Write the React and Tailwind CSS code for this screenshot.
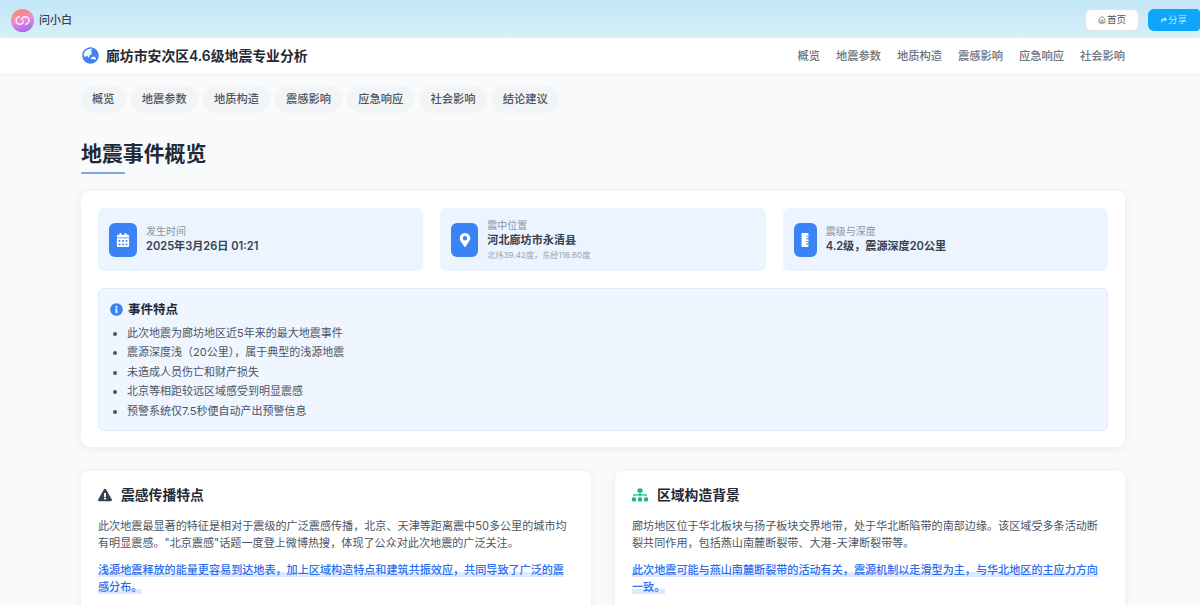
import React from "react";
import { FaCalendarAlt, FaMapMarkerAlt, FaRulerVertical, FaInfoCircle, FaExclamationTriangle, FaSitemap, FaGlobeAsia, FaShare } from "react-icons/fa";
import { Home } from "lucide-react";

const nav = ["概览", "地震参数", "地质构造", "震感影响", "应急响应", "社会影响"];
const pills = [...nav, "结论建议"];
const points = [
  "此次地震为廊坊地区近5年来的最大地震事件",
  "震源深度浅（20公里），属于典型的浅源地震",
  "未造成人员伤亡和财产损失",
  "北京等相距较远区域感受到明显震感",
  "预警系统仅7.5秒便自动产出预警信息",
];

function Logo() {
  return (
    <svg width="23" height="23" viewBox="0 0 24 24" className="shrink-0">
      <defs>
        <linearGradient id="lg" x1="0.3" y1="0" x2="0.6" y2="1">
          <stop offset="0" stopColor="#fb8a66" />
          <stop offset="0.5" stopColor="#ea8cd6" />
          <stop offset="1" stopColor="#a566f0" />
        </linearGradient>
      </defs>
      <circle cx="12" cy="12" r="12" fill="url(#lg)" />
      <circle cx="9.2" cy="12" r="3.9" fill="none" stroke="#fff" strokeWidth="1.5" strokeDasharray="18 6.5" opacity="0.85" />
      <circle cx="14.8" cy="12" r="3.9" fill="none" stroke="#fff" strokeWidth="1.5" strokeDasharray="18 6.5" strokeDashoffset="12" opacity="0.85" />
    </svg>
  );
}

function Tile({ icon, label, value, sub, iconW }) {
  return (
    <div className="flex h-[63px] items-center gap-[9px] rounded-md bg-[#ebf4ff] px-[11px]">
      <div className={`flex h-[34px] ${iconW} shrink-0 items-center justify-center rounded-md bg-[#3b82f6] text-[14px] text-white`}>
        {icon}
      </div>
      <div className="flex min-w-0 flex-col">
        <span className="text-[10px] leading-[14px] text-[#8a94a3]">{label}</span>
        <span className="text-[11.1px] font-semibold leading-[17px] text-[#374151]">{value}</span>
        {sub && <span className="text-[8.15px] leading-[12px] text-[#9ca3af]">{sub}</span>}
      </div>
    </div>
  );
}

function Card({ icon, title, body, hl }) {
  return (
    <section className="rounded-lg bg-white px-[17px] pb-6 pt-[15px] shadow-[0_1px_8px_rgba(15,23,42,0.07)]">
      <h3 className="flex h-[18px] items-center gap-[9px] text-[13.8px] font-semibold text-[#1f2937]">
        {icon}
        {title}
      </h3>
      <p className="mt-[14px] text-[11.1px] leading-[17px] text-[#4b5563]">{body}</p>
      <p className="mt-[10px] text-[11.1px] font-medium leading-[17px] text-[#2b6cf0]">
        <span className="bg-[linear-gradient(transparent_65%,#dbeafe_65%)]">{hl}</span>
      </p>
    </section>
  );
}

export default function App() {
  return (
    <div className="h-[605px] overflow-hidden bg-[#f9fafc] font-['Inter','Noto_Sans_CJK_SC',sans-serif]">
      <header className="flex h-[38px] items-center justify-between bg-[linear-gradient(180deg,#c2e6f8_0%,#d8f0fa_100%)] pl-[11px] pt-[2px]">
        <div className="flex items-center gap-[5px]">
          <Logo />
          <span className="text-[11px] font-medium text-[#374151]">问小白</span>
        </div>
        <div className="flex items-center gap-[9px]">
          <button className="flex h-[22px] w-[54px] items-center justify-center gap-px rounded-md border border-[#dfe3e8] bg-white text-[9.5px] text-[#4b5563]">
            <Home size={8} />
            首页
          </button>
          <button className="flex h-[22px] w-[52px] items-center justify-center gap-px rounded-l-md rounded-r-sm bg-[#0ea5fb] text-[9.5px] text-[#bfe8ff]">
            <FaShare size={6} />
            分享
          </button>
        </div>
      </header>

      <nav className="relative flex h-[36px] items-center justify-between bg-white pl-[82px] pr-[75px] shadow-[0_1px_3px_rgba(15,23,42,0.05)]">
        <div className="flex items-center gap-[7px]">
          <FaGlobeAsia className="text-[17px] text-[#3b82f6]" />
          <span className="text-[13.85px] font-semibold text-[#1f2937]">廊坊市安次区4.6级地震专业分析</span>
        </div>
        <div className="flex items-center gap-[16px] pt-px">
          {nav.map((n) => (
            <span key={n} className="text-[11.25px] font-medium text-[#6b7280]">{n}</span>
          ))}
        </div>
      </nav>

      <main className="pl-[81px] pr-[75px]">
        <div className="flex gap-[5.2px] pt-[11px]">
          {pills.map((p) => (
            <span key={p} className="flex h-[28px] items-center rounded-full bg-[#f3f4f6] px-[11px] text-[11.25px] font-medium text-[#4b5563]">{p}</span>
          ))}
        </div>

        <h1 className="mt-[26px] text-[20.9px] font-bold leading-[30px] text-[#1f2937]">地震事件概览</h1>
        <div className="mt-[3px] h-[2px] w-[44px] rounded-full bg-[#7ba6ee]" />

        <section className="mt-[17px] h-[256px] rounded-lg bg-white p-[17px] shadow-[0_1px_8px_rgba(15,23,42,0.08)]">
          <div className="grid grid-cols-3 gap-[17px]">
            <Tile icon={<FaCalendarAlt />} iconW="w-[28px]" label="发生时间" value="2025年3月26日 01:21" />
            <Tile icon={<FaMapMarkerAlt />} iconW="w-[27px]" label="震中位置" value="河北廊坊市永清县" sub="北纬39.42度，东经116.60度" />
            <Tile icon={<FaRulerVertical />} iconW="w-[23px]" label="震级与深度" value="4.2级，震源深度20公里" />
          </div>
          <div className="mt-[17px] h-[143px] rounded-md border border-[#dbeafe] bg-[#eff6ff] px-[11px] pt-[12px]">
            <h3 className="flex items-center gap-[5px] text-[12.5px] font-semibold leading-[17px] text-[#1f2937]">
              <FaInfoCircle className="text-[13px] text-[#3b82f6]" />
              事件特点
            </h3>
            <ul className="mt-[6px] list-disc pl-[17px] text-[11px] leading-[19.4px] text-[#4b5563]">
              {points.map((t) => (
                <li key={t}>{t}</li>
              ))}
            </ul>
          </div>
        </section>

        <div className="mt-[24px] grid grid-cols-2 gap-[24px]">
          <Card
            icon={<FaExclamationTriangle className="text-[14px] text-[#374151]" />}
            title="震感传播特点"
            body={'此次地震最显著的特征是相对于震级的广泛震感传播，北京、天津等距离震中50多公里的城市均有明显震感。"北京震感"话题一度登上微博热搜，体现了公众对此次地震的广泛关注。'}
            hl="浅源地震释放的能量更容易到达地表，加上区域构造特点和建筑共振效应，共同导致了广泛的震感分布。"
          />
          <Card
            icon={<FaSitemap className="text-[16px] text-[#10b981]" />}
            title="区域构造背景"
            body="廊坊地区位于华北板块与扬子板块交界地带，处于华北断陷带的南部边缘。该区域受多条活动断裂共同作用，包括燕山南麓断裂带、大港-天津断裂带等。"
            hl="此次地震可能与燕山南麓断裂带的活动有关，震源机制以走滑型为主，与华北地区的主应力方向一致。"
          />
        </div>
      </main>
    </div>
  );
}
